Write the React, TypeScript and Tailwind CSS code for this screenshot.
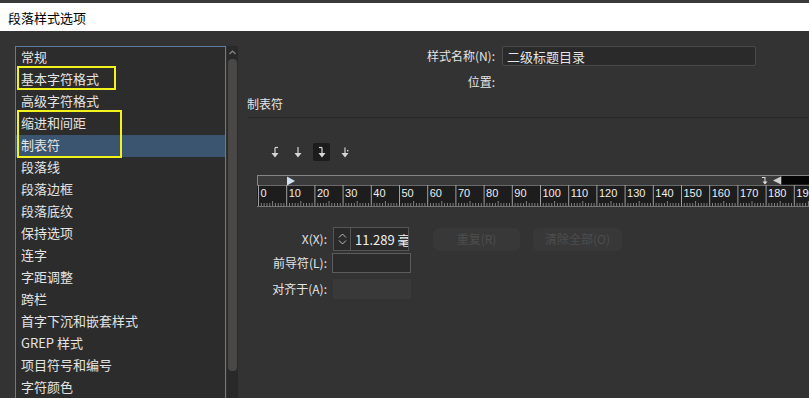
import React from 'react';

const cats = [
  '常规',
  '基本字符格式',
  '高级字符格式',
  '缩进和间距',
  '制表符',
  '段落线',
  '段落边框',
  '段落底纹',
  '保持选项',
  '连字',
  '字距调整',
  '跨栏',
  '首字下沉和嵌套样式',
  'GREP 样式',
  '项目符号和编号',
  '字符颜色',
];

function TabIcon({ kind }: { kind: 'left' | 'center' | 'right' | 'decimal' }) {
  return (
    <svg width="12" height="14" viewBox="0 0 12 14">
      <line x1="6" y1={kind === 'center' ? 2 : 2.5} x2="6" y2="9" stroke="#d6d6d6" strokeWidth="1.2" />
      {kind === 'left' && <line x1="6" y1="2.5" x2="9" y2="2.5" stroke="#d6d6d6" strokeWidth="1.2" />}
      {kind === 'right' && <line x1="3" y1="2.5" x2="6" y2="2.5" stroke="#d6d6d6" strokeWidth="1.2" />}
      {kind === 'decimal' && <rect x="8" y="5" width="1.4" height="1.4" fill="#d6d6d6" />}
      <polygon points="2.5,8 9.5,8 6,12.5" fill="#d6d6d6" />
    </svg>
  );
}

function Ruler() {
  const w = 552;
  const step = 28.2;
  const majors = Array.from({ length: 20 }, (_, i) => i);
  const minors = Array.from({ length: 196 }, (_, i) => i);
  return (
    <svg width={w} height="32" viewBox={`0 0 ${w} 32`} className="block">
      <rect x="0" y="0" width={w} height="10" fill="#3b3b3b" />
      <line x1="0" y1="0.5" x2={w} y2="0.5" stroke="#858585" />
      <line x1="0.5" y1="0" x2="0.5" y2="32" stroke="#858585" />
      <rect x="0" y="10" width={w} height="22" fill="#1d1d1d" />
      <line x1="0" y1="10.5" x2={w} y2="10.5" stroke="#6a6a6a" />
      {minors.map((i) => {
        const x = 1.5 + (i * step) / 10;
        const h = i % 10 === 0 ? 0 : i % 5 === 0 ? 5 : 3;
        return h ? <line key={i} x1={x} y1={31 - h} x2={x} y2="31" stroke="#9a9a9a" strokeWidth="0.8" /> : null;
      })}
      {majors.map((i) => {
        const x = 1.5 + i * step;
        return (
          <g key={i}>
            <line x1={x} y1="10" x2={x} y2="31" stroke="#a0a0a0" />
            <text x={x + 2} y="22" fill="#eeeeee" fontSize="11" fontFamily="'Liberation Sans', sans-serif">
              {i * 10}
            </text>
          </g>
        );
      })}
      <line x1="0" y1="31.5" x2={w} y2="31.5" stroke="#777" />
      <polygon points="30,1.5 38,6 30,10.5" fill="#cfe2f3" />
      <line x1="508" y1="2" x2="508" y2="7" stroke="#e0e0e0" strokeWidth="1" />
      <line x1="505" y1="2.5" x2="508" y2="2.5" stroke="#e0e0e0" strokeWidth="1" />
      <polygon points="505.5,6.5 510.5,6.5 508,9.5" fill="#e0e0e0" />
      <polygon points="524,1.5 516,5.5 524,9.5" fill="#d0d0d0" />
      <rect x="525" y="1" width={w - 525} height="8.5" fill="#050505" />
    </svg>
  );
}

export default function App() {
  return (
    <div className="w-[809px] h-[398px] overflow-hidden bg-[#333333] flex flex-col font-['Noto_Sans_CJK_SC',sans-serif] text-[#e4e4e4]">
      {/* title bar */}
      <div className="h-[3px] bg-[#3a3a3a]" />
      <div className="h-[28px] bg-white flex items-center px-2 text-[13px] text-black leading-none">段落样式选项</div>

      <div className="flex flex-1 min-h-0">
        {/* category list */}
        <div className="flex pl-[15px] pt-[15px] gap-[1px]">
          <div className="relative w-[211px] h-[360px] border border-[#5b7ca3] bg-[#2c2c2c]">
            {cats.map((c, i) => (
              <div
                key={c}
                className={`h-[22px] flex items-center pl-[5px] pb-[3px] text-[13px] leading-none ${
                  i === 4 ? 'bg-[#3b5570]' : ''
                }`}
              >
                {c}
              </div>
            ))}
            <div className="absolute left-[1px] top-[19px] w-[99px] h-[24px] border-2 border-[#f2f21c]" />
            <div className="absolute left-[1px] top-[63px] w-[105px] h-[48px] border-2 border-[#f2f21c]" />
          </div>
          <div className="w-[11px] h-[360px] bg-[#292929] flex flex-col items-center pt-[3px]">
            <svg width="9" height="7" viewBox="0 0 9 7">
              <polyline points="1.5,5 4.5,2 7.5,5" fill="none" stroke="#8a8a8a" strokeWidth="1.2" />
            </svg>
            <div className="mt-[3px] w-[9px] h-[312px] rounded-[4px] bg-[#4a4846]" />
          </div>
        </div>

        {/* right panel */}
        <div className="flex-1 flex flex-col pl-[9px] pt-[15px] text-[12px]">
          <div className="flex items-center h-[20px]">
            <div className="w-[248px] text-right leading-none">样式名称(N):</div>
            <div className="ml-[7px] w-[254px] h-[20px] border border-[#4a4a4a] rounded-[2px] bg-[#2a2a2a] flex items-center pl-[4px] text-[13px] leading-none">
              二级标题目录
            </div>
          </div>
          <div className="flex items-center h-[16px] mt-[8px]">
            <div className="w-[248px] text-right leading-none">位置:</div>
          </div>
          <div className="mt-[6px] h-[16px] flex items-center leading-none">制表符</div>
          <div className="mt-[5px] h-px bg-[#282828]" />

          <div className="mt-[25px] ml-[20px] flex items-center gap-[7px]">
            <div className="w-[16px] h-[18px] flex items-center justify-center"><TabIcon kind="left" /></div>
            <div className="w-[16px] h-[18px] flex items-center justify-center"><TabIcon kind="center" /></div>
            <div className="w-[17px] h-[18px] rounded-[2px] bg-[#1c1c1c] flex items-center justify-center"><TabIcon kind="right" /></div>
            <div className="w-[16px] h-[18px] flex items-center justify-center"><TabIcon kind="decimal" /></div>
          </div>

          <div className="mt-[14px] ml-[10px]">
            <Ruler />
          </div>

          <div className="mt-[20px] flex flex-col">
            <div className="flex items-center h-[24px]">
              <div className="w-[80px] text-right leading-none">X(X):</div>
              <div className="ml-[6px] w-[76px] h-[24px] border border-[#555] bg-[#2a2a2a] flex items-stretch">
                <div className="w-[17px] border-r border-[#555] flex flex-col items-center justify-center gap-[2px]">
                  <svg width="9" height="5" viewBox="0 0 9 5"><polyline points="1,4.5 4.5,1 8,4.5" fill="none" stroke="#bbb" strokeWidth="1" /></svg>
                  <svg width="9" height="5" viewBox="0 0 9 5"><polyline points="1,0.5 4.5,4 8,0.5" fill="none" stroke="#bbb" strokeWidth="1" /></svg>
                </div>
                <div className="flex-1 overflow-hidden whitespace-nowrap pl-[4px] flex items-center text-[13px] leading-none text-[#eeeeee]">11.289 毫米</div>
              </div>
              <div className="ml-[24px] w-[87px] h-[23px] rounded-[6px] bg-[#383838] flex items-center justify-center text-[12px] text-[#4e4e4e] leading-none">重复(R)</div>
              <div className="ml-[13px] w-[89px] h-[23px] rounded-[6px] bg-[#383838] flex items-center justify-center text-[12px] text-[#4e4e4e] leading-none">清除全部(O)</div>
            </div>
            <div className="flex items-center h-[20px] mt-[2px]">
              <div className="w-[80px] text-right leading-none">前导符(L):</div>
              <div className="ml-[5px] w-[79px] h-[20px] border border-[#5c5c5c] bg-[#2b2b2b]" />
            </div>
            <div className="flex items-center h-[20px] mt-[6px]">
              <div className="w-[80px] text-right leading-none">对齐于(A):</div>
              <div className="ml-[6px] w-[78px] h-[20px] bg-[#393939]" />
            </div>
          </div>
        </div>
      </div>
    </div>
  );
}
